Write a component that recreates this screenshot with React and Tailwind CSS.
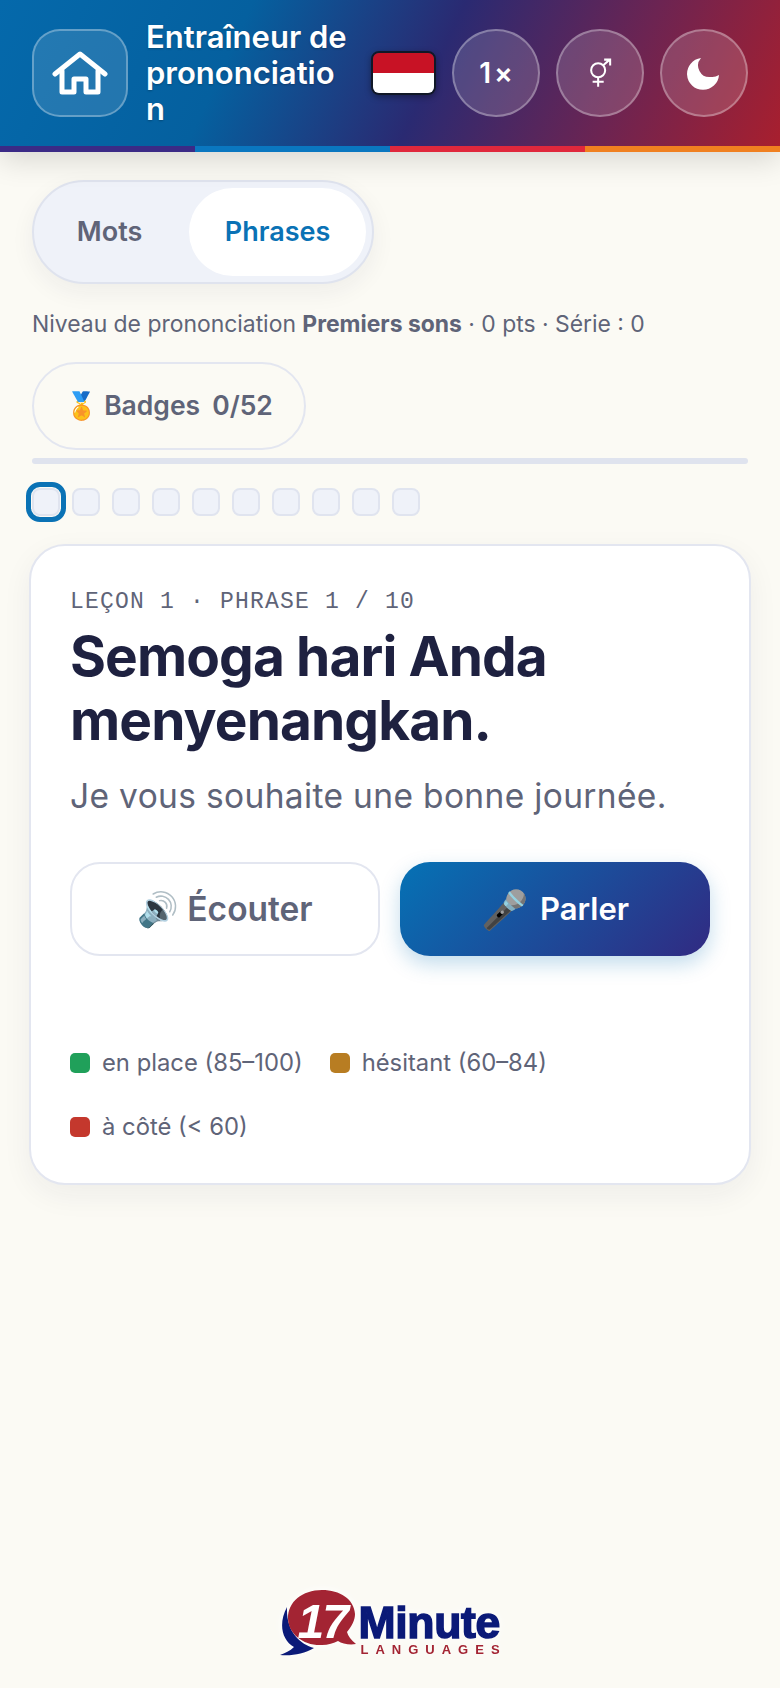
import { useState } from "react";

const font = { inter: "font-['Inter',sans-serif]" };

function HomeIcon() {
  return (
    <svg width="56" height="44" viewBox="0 0 56 44" fill="none" stroke="#fff" strokeWidth="5" strokeLinejoin="round" strokeLinecap="round">
      <path d="M3 23 L28 3 L53 23" />
      <path d="M10 20 V41 H22 V28 H34 V41 H46 V20" />
    </svg>
  );
}

function GenderIcon() {
  return (
    <svg width="24" height="30" viewBox="0 0 26 32" fill="none" stroke="#fff" strokeWidth="2.2">
      <circle cx="11" cy="13" r="7.6" />
      <path d="M11 21 V31 M5 25.500 H17" />
      <path d="M16.500 7.500 L23.500 1.500 M17.500 1.500 H24 V8" />
    </svg>
  );
}

function MoonIcon() {
  return (
    <svg width="34" height="34" viewBox="0 0 34 34">
      <path fill="#fff" d="M14 2 A16 16 0 1 0 32 19 A12 12 0 0 1 24 21 A11.500 11.500 0 0 1 14 2 Z" />
    </svg>
  );
}

function RoundButton({ children }) {
  return (
    <button className="flex h-[88px] w-[88px] shrink-0 items-center justify-center rounded-full border-2 border-white/30 bg-white/15 text-[28px] font-semibold text-white">
      {children}
    </button>
  );
}

function Header() {
  return (
    <header className="relative shadow-[0_8px_28px_rgba(0,0,0,0.14)]">
      <div className="flex h-[146px] items-center bg-[linear-gradient(115deg,#0569ab_0%,#05609f_30%,#2a2a72_55%,#6c2452_78%,#a81f2e_100%)] pl-8 pr-8">
        <button className="flex h-[88px] w-[96px] shrink-0 items-center justify-center rounded-[28px] border-2 border-white/30 bg-white/12">
          <HomeIcon />
        </button>
        <h1 className="ml-[18px] w-[205px] shrink-0 text-[31px] font-semibold leading-[36px] text-white [overflow-wrap:anywhere] [text-shadow:0_1px_2px_rgba(0,0,0,0.25)]">
          Entraîneur de prononciation
        </h1>
        <div className="ml-5 flex h-[44px] w-[65px] shrink-0 flex-col overflow-hidden rounded-[8px] border-2 border-[#111827] shadow-[0_2px_6px_rgba(0,0,0,0.35)]">
          <div className="h-1/2 bg-[#c81225]" />
          <div className="h-1/2 bg-white" />
        </div>
        <div className="ml-4 flex gap-4">
          <RoundButton>
            1<span className="ml-[3px] text-[28px]">×</span>
          </RoundButton>
          <RoundButton>
            <GenderIcon />
          </RoundButton>
          <RoundButton>
            <MoonIcon />
          </RoundButton>
        </div>
      </div>
      <div className="grid h-[6px] grid-cols-4">
        <div className="bg-[#3b2a86]" />
        <div className="bg-[#0a77c0]" />
        <div className="bg-[#e0283c]" />
        <div className="bg-[#f08020]" />
      </div>
    </header>
  );
}

function ModeSwitch() {
  return (
    <div className="flex h-[104px] w-[342px] items-center rounded-full border-2 border-[#dfe3ee] bg-[#eff2f9] pl-[6px] pr-[6px] shadow-[0_8px_24px_rgba(30,30,60,0.06)]">
      <button className="mr-[10px] h-[88px] w-[140px] text-[27px] font-semibold text-[#5f6478]">Mots</button>
      <button className="h-[88px] w-[178px] rounded-full bg-white text-[27px] font-semibold text-[#0a72b5]">Phrases</button>
    </div>
  );
}

function LessonDots() {
  const dots = [0, 1, 2, 3, 4, 5, 6, 7, 8, 9];
  return (
    <div className="mt-6 flex gap-3">
      {dots.map((d) => (
        <div
          key={d}
          className={
            d === 0
              ? "h-7 w-7 rounded-[8px] border-2 border-[#e0e4ef] bg-[#eff2f9] outline-[5px] outline-offset-[1px] outline-[#0a72b5]"
              : "h-7 w-7 rounded-[8px] border-2 border-[#e0e4ef] bg-[#eff2f9]"
          }
        />
      ))}
    </div>
  );
}

function Legend({ color, label }) {
  return (
    <div className="flex items-center gap-3">
      <span className={`h-5 w-5 rounded-[5px] ${color}`} />
      <span className="text-[23.800px] leading-[32px] text-[#5f6478]">{label}</span>
    </div>
  );
}

function Card() {
  return (
    <section className="mx-[-3px] mt-7 rounded-[36px] border-2 border-[#e3e6f0] bg-white pb-[40px] pl-[39px] pr-[39px] pt-[42px] shadow-[0_10px_30px_rgba(30,30,60,0.06)]">
      <div className="font-['Liberation_Mono',monospace] text-[23px] leading-[28px] tracking-[1.2px] text-[#5f6478]">
        LEÇON 1 · PHRASE 1 / 10
      </div>
      <h2 className="mt-[8px] text-[55px] font-bold leading-[64px] tracking-[-0.9px] text-[#1e2140]">
        Semoga hari Anda menyenangkan.
      </h2>
      <p className="mt-[20px] text-[33.500px] leading-[48px] tracking-[0.35px] text-[#5f6478]">
        Je vous souhaite une bonne journée.
      </p>
      <div className="mt-[42px] grid grid-cols-2 gap-5">
        <button className="flex h-[94px] items-center justify-center gap-2 rounded-[30px] border-2 border-[#e3e6f0] bg-white text-[33.500px] font-semibold text-[#5f6478]">
          <span>🔊</span> Écouter
        </button>
        <button className="flex h-[94px] items-center justify-center gap-3 rounded-[30px] bg-[linear-gradient(135deg,#0572b5,#312a82)] text-[31px] font-semibold text-white shadow-[0_8px_20px_rgba(10,114,181,0.25)]">
          <span className="text-[38px]">🎤</span> Parler
        </button>
      </div>
      <div className="mt-[91px] flex flex-wrap gap-x-[27px] gap-y-[32px]">
        <Legend color="bg-[#20a05a]" label="en place (85–100)" />
        <Legend color="bg-[#b87d22]" label="hésitant (60–84)" />
        <Legend color="bg-[#c4382d]" label="à côté (< 60)" />
      </div>
    </section>
  );
}

function Logo() {
  return (
    <div className="flex items-start [filter:drop-shadow(0_0_5px_#fff)]">
      <div className="relative h-[66px] w-[78px]">
        <svg width="78" height="66" viewBox="0 0 78 66" className="absolute left-0 top-0">
          <path fill="#0b1a78" d="M7 17 C-2 34 2 50 14 57 C10 61 5 63 0 65 C12 66 24 64 34 58 C20 54 6 42 7 17 Z" />
          <path fill="#a32433" d="M42 0 C22 0 8 12 8 28 C8 44 24 56 42 55 C48 55 54 53 58 51 C62 54 70 55 76 54 C71 50 68 46 67 42 C72 36 75 30 75 24 C74 9 60 0 42 0 Z" />
        </svg>
        <span className="absolute left-[18px] top-[6px] font-['Liberation_Sans',sans-serif] text-[48px] font-bold italic leading-[52px] tracking-[-2px] text-white">
          17
        </span>
      </div>
      <div className="ml-[1px] mt-[12px] flex w-[142px] flex-col">
        <span className="font-['Liberation_Sans',sans-serif] text-[44.500px] font-bold leading-[42px] tracking-[-0.3px] text-[#0b1a78] [-webkit-text-stroke:1.5px_#0b1a78]">
          Minute
        </span>
        <span className="mt-[-1px] whitespace-nowrap pl-[2px] font-['Liberation_Sans',sans-serif] text-[13px] font-bold leading-[14px] tracking-[7px] text-[#a32433]">
          LANGUAGES
        </span>
      </div>
    </div>
  );
}

export default function App() {
  const [mode] = useState("phrases");

  return (
    <div data-mode={mode} className={`flex h-[1688px] flex-col overflow-hidden bg-[#fbfaf4] ${font.inter}`}>
      <Header />
      <main className="flex flex-1 flex-col px-8 pt-7">
        <ModeSwitch />
        <p className="mt-[24px] text-[22.900px] leading-[32px] text-[#5f6478]">
          Niveau de prononciation <b className="font-bold">Premiers sons</b> · 0 pts · Série : 0
        </p>
        <button className="mt-[22px] flex h-[88px] w-[274px] items-center justify-center gap-[6px] rounded-full border-2 border-[#e3e6f0] text-[26.500px] font-semibold text-[#5f6478]">
          <span>🏅</span> Badges <span className="ml-[6px]">0/52</span>
        </button>
        <div className="mt-2 h-[6px] rounded-full bg-[#dfe3ee]" />
        <LessonDots />
        <Card />
        <footer className="mt-auto flex justify-center pb-[31px]">
          <Logo />
        </footer>
      </main>
    </div>
  );
}
